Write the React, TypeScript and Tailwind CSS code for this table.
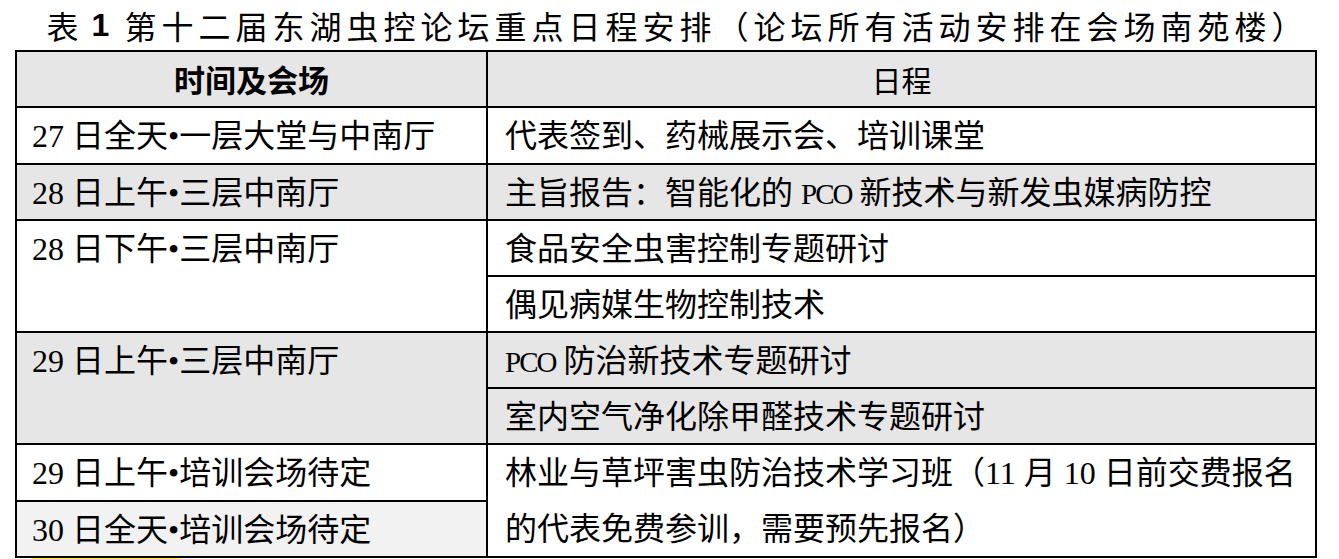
import React from 'react';

// ── Schedule table for the forum ──────────────────────────────────────────────
const SERIF = 'font-["Liberation_Serif","Noto_Sans_CJK_SC",serif]';
const SANS = 'font-["Noto_Sans_CJK_SC","Liberation_Sans",sans-serif]';

const GRAY = 'bg-[#e6e6e6]';
const LIGHT = 'bg-[#f2f2f2]';
const WHITE = 'bg-white';

// "PCO" is set narrower in the source document
const Pco = () => <span className="text-[29px] tracking-[-2px]">PCO</span>;

function Cell({
  children,
  bg,
  side,
  span,
}: {
  children: React.ReactNode;
  bg: string;
  side: 'left' | 'right';
  span?: boolean;
}) {
  return (
    <div
      className={[
        bg,
        SERIF,
        'text-[32px] leading-[54px] text-black whitespace-nowrap pt-[1px]',
        side === 'left' ? 'pl-[15px]' : 'pl-[17px]',
        span ? 'row-span-2' : '',
      ].join(' ')}
    >
      {children}
    </div>
  );
}

export default function App() {
  return (
    <div className="w-[1339px] h-[559px] bg-white overflow-hidden">
      {/* Title */}
      <div
        className={`${SANS} h-[50px] pl-[16px] flex items-center justify-center text-[32px] tracking-[5px] text-black whitespace-nowrap`}
      >
        表
        <span className='font-["Liberation_Sans",sans-serif] font-bold ml-[8px] mr-[10px]'>1</span>
        第十二届东湖虫控论坛重点日程安排（论坛所有活动安排在会场南苑楼）
      </div>

      {/* Table */}
      <div className="ml-[15px] w-[1302px] grid grid-cols-[469px_827px] grid-rows-[54px_55px_54px_54px_54px_54px_54px_55px_54px] gap-[2px] p-[2px] bg-black">
        <div
          className={`${GRAY} ${SANS} flex items-center justify-center text-[31px] font-bold text-black`}
        >
          时间及会场
        </div>
        <div
          className={`${GRAY} ${SANS} flex items-center justify-center text-[30px] text-black`}
        >
          日程
        </div>

        <Cell bg={WHITE} side="left">27 日全天•一层大堂与中南厅</Cell>
        <Cell bg={WHITE} side="right">代表签到、药械展示会、培训课堂</Cell>

        <Cell bg={GRAY} side="left">28 日上午•三层中南厅</Cell>
        <Cell bg={GRAY} side="right">
          主旨报告：智能化的 <Pco /> 新技术与新发虫媒病防控
        </Cell>

        <Cell bg={WHITE} side="left" span>28 日下午•三层中南厅</Cell>
        <Cell bg={WHITE} side="right">食品安全虫害控制专题研讨</Cell>
        <Cell bg={WHITE} side="right">偶见病媒生物控制技术</Cell>

        <Cell bg={GRAY} side="left" span>29 日上午•三层中南厅</Cell>
        <Cell bg={GRAY} side="right">
          <Pco /> 防治新技术专题研讨
        </Cell>
        <Cell bg={GRAY} side="right">室内空气净化除甲醛技术专题研讨</Cell>

        <Cell bg={WHITE} side="left">29 日上午•培训会场待定</Cell>
        <div
          className={`${WHITE} ${SERIF} row-span-2 text-[32px] leading-[56px] text-black whitespace-nowrap pl-[17px]`}
        >
          <div>林业与草坪害虫防治技术学习班（11 月 10 日前交费报名</div>
          <div>的代表免费参训，需要预先报名）</div>
        </div>
        <Cell bg={LIGHT} side="left">30 日全天•培训会场待定</Cell>
      </div>

      {/* Highlight edge peeking below the table */}
      <div className="ml-[32px] w-[148px] h-[2px] bg-[#ffff00]" />
    </div>
  );
}
